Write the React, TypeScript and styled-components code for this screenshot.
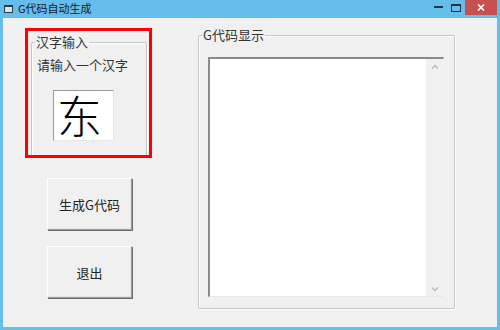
import React from "react";
import styled, { createGlobalStyle } from "styled-components";

const Global = createGlobalStyle`
    html, body {
        margin: 0;
        padding: 0;
        background: #ffffff;
    }
    * {
        box-sizing: border-box;
    }
`;

const Window = styled.div`
    width: 500px;
    height: 330px;
    display: flex;
    flex-direction: column;
    background: #65bdea;
    font-family: "Noto Sans CJK SC", "Noto Sans", sans-serif;
    font-size: 12px;
    color: #222;
    overflow: hidden;
`;

const TitleBar = styled.div`
    height: 18px;
    display: flex;
    align-items: flex-start;
    padding-left: 4px;
`;

const AppIcon = styled.div`
    width: 9px;
    height: 8px;
    margin-top: 5px;
    border: 1px solid #2a3a48;
    border-top-width: 2px;
    background: #d8e6ee;
`;

const Title = styled.div`
    margin-left: 5px;
    margin-top: 1px;
    font-size: 11px;
    line-height: 15px;
    color: #1a1a1a;
`;

const Caption = styled.div`
    margin-left: auto;
    display: flex;
    height: 15px;
`;

const CapButton = styled.div<{ $close?: boolean }>`
    width: ${(p) => (p.$close ? "32px" : "18px")};
    height: 15px;
    display: flex;
    align-items: center;
    justify-content: center;
    background: ${(p) => (p.$close ? "#c75050" : "transparent")};
    margin-right: ${(p) => (p.$close ? "3px" : "0")};
`;

const Client = styled.div`
    flex: 1;
    margin: 0 3px 3px 3px;
    background: #f0f0f0;
    display: flex;
    padding: 10px 0 0 22px;
    gap: 46px;
`;

const LeftColumn = styled.div`
    width: 127px;
    display: flex;
    flex-direction: column;
    align-items: flex-start;
`;

const Highlight = styled.div`
    width: 127px;
    height: 130px;
    border: 3px solid #ff0000;
    padding: 4px 0 0 3px;
    overflow: hidden;
`;

const Group = styled.fieldset<{ $w: number; $h: number }>`
    margin: 0;
    width: ${(p) => p.$w}px;
    height: ${(p) => p.$h}px;
    border: 1px solid #c6c6c6;
    border-radius: 2px;
    box-shadow: inset 1px 1px 0 #ffffff, 1px 1px 0 #ffffff;
    padding: 0 9px;
    min-width: 0;
`;

const Legend = styled.legend`
    margin-left: -6px;
    padding: 0 1px 0 1px;
    font-size: 13px;
    line-height: 14px;
    color: #333;
`;

const Prompt = styled.div`
    margin-top: 9px;
    margin-left: -4px;
    font-size: 13px;
    line-height: 14px;
    color: #333;
    white-space: nowrap;
`;

const CharBox = styled.div`
    margin: 18px 0 0 12px;
    width: 61px;
    height: 51px;
    background: #ffffff;
    border-top: 1px solid #9a9a9a;
    border-left: 1px solid #9a9a9a;
    border-right: 1px solid #e6e6e6;
    border-bottom: 1px solid #e6e6e6;
    font-size: 45px;
    line-height: 47px;
    color: #000;
    padding-left: 3px;
    font-weight: 300;
`;

const Button = styled.div<{ $top: number }>`
    margin-top: ${(p) => p.$top}px;
    margin-left: 22px;
    width: 85px;
    height: 52px;
    display: flex;
    align-items: center;
    justify-content: center;
    background: #f0f0f0;
    border-top: 1px solid #ffffff;
    border-left: 1px solid #ffffff;
    border-right: 1px solid #a0a0a0;
    border-bottom: 1px solid #a0a0a0;
    box-shadow: 1px 1px 0 #696969, inset -1px -1px 0 #e3e3e3;
    font-size: 13px;
    color: #222;
`;

const Memo = styled.div`
    margin-top: 15px;
    width: 236px;
    height: 240px;
    display: flex;
    background: #ffffff;
    border-top: 2px solid #8a8a8a;
    border-left: 2px solid #8a8a8a;
    border-right: 1px solid #f0f0f0;
    border-bottom: 1px solid #e8e8e8;
`;

const MemoText = styled.div`
    flex: 1;
`;

const ScrollTrack = styled.div`
    width: 17px;
    background: #f0f0f0;
    display: flex;
    flex-direction: column;
    justify-content: space-between;
    align-items: center;
    padding: 5px 0 4px;
`;

const Chevron = ({ up }: { up?: boolean }) => (
    <svg width="8" height="5" viewBox="0 0 8 5">
        <path
            d={up ? "M1 4.5 L4 1.5 L7 4.5" : "M1 0.5 L4 3.5 L7 0.5"}
            fill="none"
            stroke="#bcbcbc"
            strokeWidth="1.5"
        />
    </svg>
);

export default function App() {
    return (
        <>
            <Global />
            <Window>
                <TitleBar>
                    <AppIcon />
                    <Title>G代码自动生成</Title>
                    <Caption>
                        <CapButton>
                            <svg width="9" height="3" viewBox="0 0 9 3">
                                <rect x="0" y="0" width="9" height="2" fill="#2a3440" />
                            </svg>
                        </CapButton>
                        <CapButton>
                            <svg width="10" height="8" viewBox="0 0 10 8">
                                <rect x="0.5" y="0.5" width="9" height="7" fill="none" stroke="#2a3440" />
                                <rect x="0" y="0" width="10" height="2" fill="#2a3440" />
                            </svg>
                        </CapButton>
                        <CapButton $close>
                            <svg width="8" height="7" viewBox="0 0 8 7">
                                <path d="M1 0.5 L7 6.5 M7 0.5 L1 6.5" stroke="#ffffff" strokeWidth="1.6" />
                            </svg>
                        </CapButton>
                    </Caption>
                </TitleBar>
                <Client>
                    <LeftColumn>
                        <Highlight>
                            <Group $w={116} $h={130}>
                                <Legend>汉字输入</Legend>
                                <Prompt>请输入一个汉字</Prompt>
                                <CharBox>东</CharBox>
                            </Group>
                        </Highlight>
                        <Button $top={20}>生成G代码</Button>
                        <Button $top={16}>退出</Button>
                    </LeftColumn>
                    <Group $w={257} $h={281}>
                        <Legend>G代码显示</Legend>
                        <Memo>
                            <MemoText />
                            <ScrollTrack>
                                <Chevron up />
                                <Chevron />
                            </ScrollTrack>
                        </Memo>
                    </Group>
                </Client>
            </Window>
        </>
    );
}
